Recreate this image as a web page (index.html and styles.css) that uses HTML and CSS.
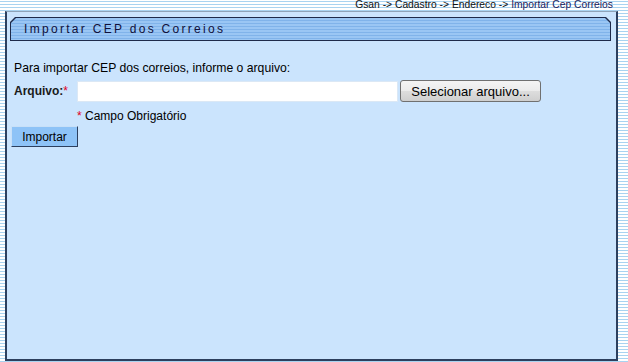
FILE: index.html
```html
<!DOCTYPE html>
<html lang="pt">
<head>
    <meta charset="UTF-8">
    <title>Importar CEP dos Correios</title>
    <link rel="stylesheet" href="styles.css">
</head>
<body>
    <div class="breadcrumb">Gsan -&gt; Cadastro -&gt; Endereco -&gt; <span class="current">Importar Cep Correios</span></div>
    <div class="panel">
        <div class="tab">
            <div class="tab-inner">Importar CEP dos Correios</div>
        </div>
        <form class="form">
            <p class="intro">Para importar CEP dos correios, informe o arquivo:</p>
            <div class="row">
                <label class="label" for="arquivo">Arquivo:<span class="req">*</span></label>
                <input type="text" id="arquivo" class="file-text">
                <button type="button" class="file-button">Selecionar arquivo...</button>
            </div>
            <div class="note"><span class="req">*</span> Campo Obrigatório</div>
            <button type="button" class="submit">Importar</button>
        </form>
    </div>
</body>
</html>
```

FILE: styles.css
```css
body {
    margin: 0;
    font-family: 'Liberation Sans', Arial, sans-serif;
    font-size: 12px;
    color: #000;
    height: 362px;
    overflow: hidden;
    background: repeating-linear-gradient(to bottom, #ffffff 0, #ffffff 1px, #a9d3f0 1px, #a9d3f0 2px, #ffffff 2px, #ffffff 3px);
}
.breadcrumb {
    height: 11px;
    line-height: 10px;
    font-size: 10.3px;
    text-align: right;
    padding-right: 15px;
    color: #111;
}
.breadcrumb .current {
    color: #1c1c5c;
}
.panel {
    margin-left: 5px;
    width: 609px;
    height: 342px;
    background-color: #cbe4fd;
    border: 2px solid #2c3f5e;
    border-top: 1px solid #8fa3b8;
    padding-top: 5px;
}
.tab {
    margin-left: 3px;
    width: 601px;
    height: 24px;
    background-color: #1e2a4a;
    clip-path: polygon(5px 0, calc(100% - 5px) 0, 100% 5px, 100% 100%, 0 100%, 0 5px);
    padding: 1px;
    box-sizing: border-box;
}
.tab-inner {
    height: 22px;
    clip-path: polygon(5px 0, calc(100% - 5px) 0, 100% 5px, 100% 100%, 0 100%, 0 5px);
    background: repeating-linear-gradient(to bottom, #9ac6f4 0, #9ac6f4 2px, #80b3ea 2px, #80b3ea 3px);
    padding-left: 13px;
    line-height: 22px;
    font-size: 12px;
    letter-spacing: 2.3px;
    color: #10103a;
}
.form {
    padding-left: 7px;
    margin: 0;
}
.intro {
    margin: 20px 0 0 0;
    line-height: 14px;
    font-size: 12.2px;
}
.row {
    display: flex;
    align-items: center;
    margin-top: 5px;
    height: 22px;
}
.label {
    width: 63px;
    font-weight: bold;
    color: #1a1a1a;
}
.req {
    color: #e0001a;
    font-weight: normal;
}
.file-text {
    width: 321px;
    height: 21px;
    box-sizing: border-box;
    border: 1px solid #dbe8f5;
    background: #fff;
    margin: 0 2px 0 0;
    padding: 0;
}
.file-button {
    width: 141px;
    height: 22px;
    box-sizing: border-box;
    border: 1px solid #707070;
    border-radius: 3px;
    background: linear-gradient(to bottom, #f4f4f4 0%, #ebebeb 50%, #dddddd 51%, #cfcfcf 100%);
    font-family: 'Liberation Sans', Arial, sans-serif;
    font-size: 13px;
    color: #000;
    padding: 0;
}
.note {
    margin-top: 7px;
    margin-left: 63px;
    line-height: 14px;
}
.submit {
    display: block;
    margin-top: 3px;
    margin-left: -3px;
    width: 67px;
    height: 21px;
    background-color: #8ec3f7;
    border: 1px solid #2c3f5e;
    border-top-color: #c8e0f8;
    border-left-color: #c8e0f8;
    font-family: 'Liberation Sans', Arial, sans-serif;
    font-size: 12px;
    color: #000;
    padding: 0;
}
```
